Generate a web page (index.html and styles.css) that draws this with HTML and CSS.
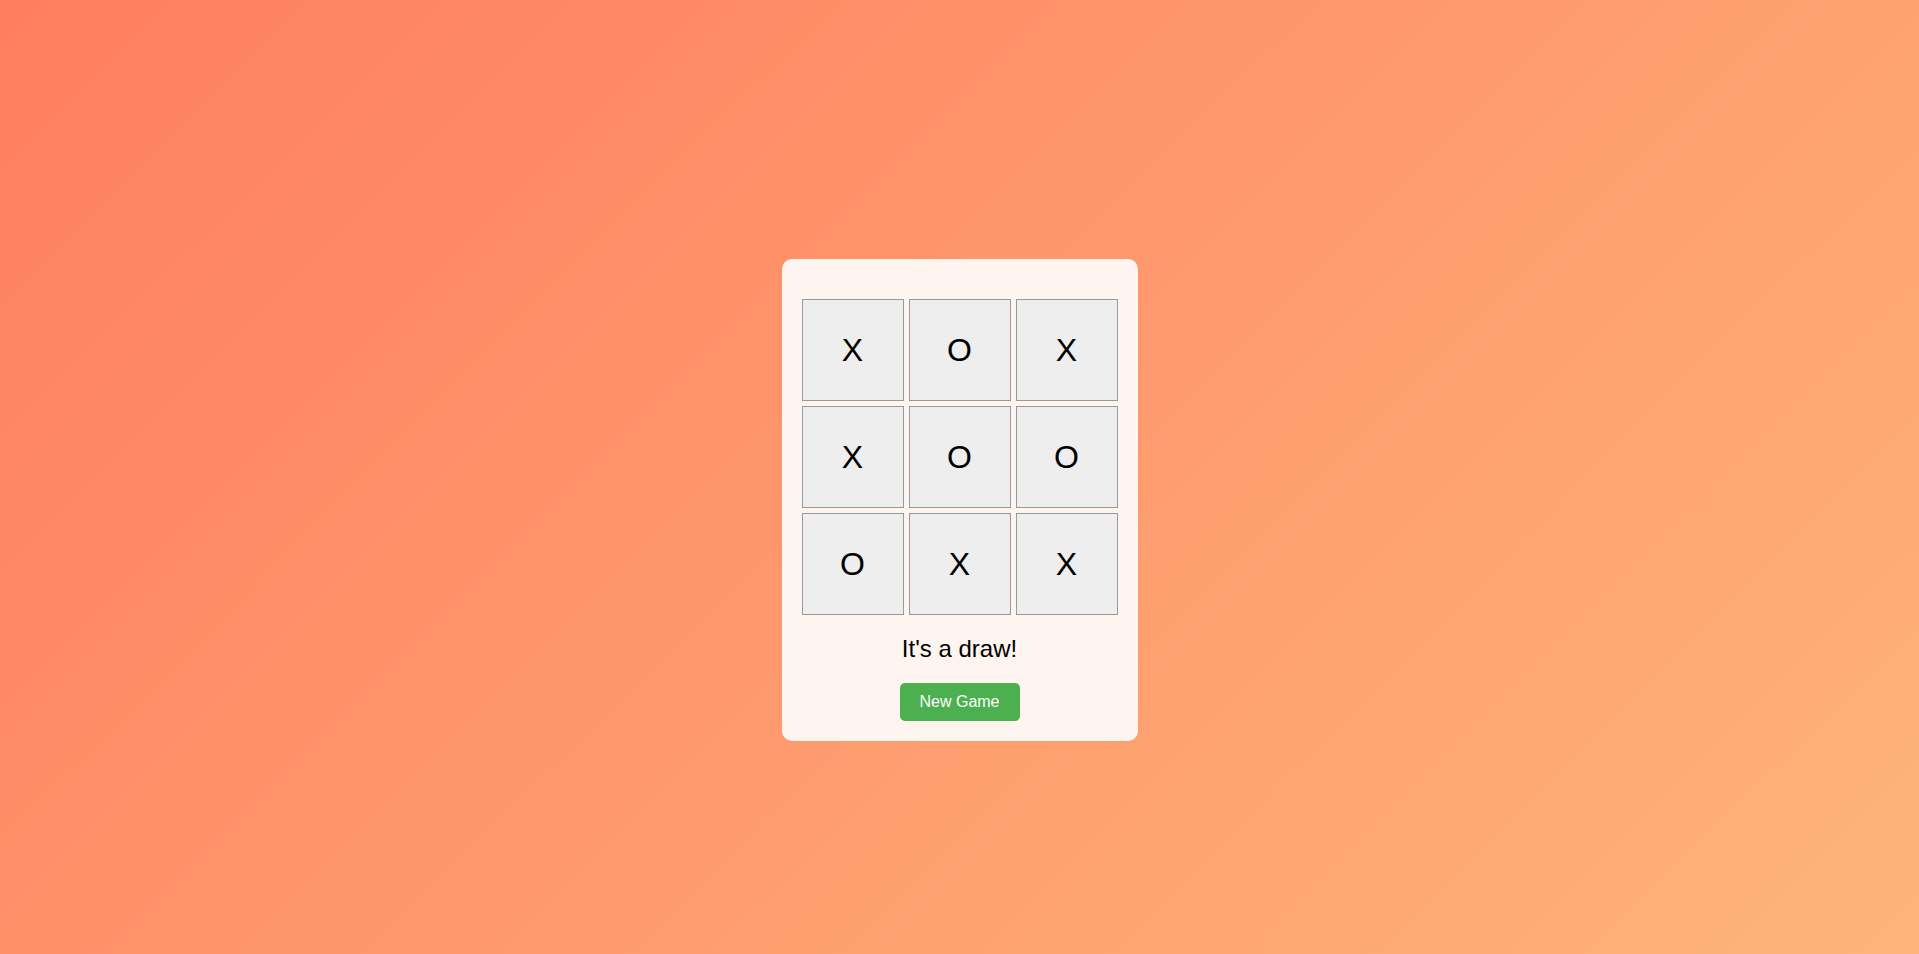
FILE: index.html
```html
<!DOCTYPE html>
<html lang="en">
<head>
<meta charset="utf-8">
<title>Tic Tac Toe</title>
<link rel="stylesheet" href="styles.css">
</head>
<body>
<main class="card">
  <div class="board">
    <div class="cell">X</div>
    <div class="cell">O</div>
    <div class="cell">X</div>
    <div class="cell">X</div>
    <div class="cell">O</div>
    <div class="cell">O</div>
    <div class="cell">O</div>
    <div class="cell">X</div>
    <div class="cell">X</div>
  </div>
  <p class="status">It's a draw!</p>
  <button class="reset">New Game</button>
</main>
</body>
</html>
```
FILE: styles.css
```css
* { box-sizing: border-box; }
html, body { margin: 0; height: 100%; }
body {
  min-height: 100vh;
  display: flex;
  align-items: center;
  justify-content: center;
  padding-top: 46px;
  background: linear-gradient(135deg, #ff7e5f, #feb47b);
  font-family: "Liberation Sans", Arial, sans-serif;
}
.card {
  width: 356px;
  background: #fff5f0;
  border-radius: 10px;
  padding: 40px 20px 20px;
  display: flex;
  flex-direction: column;
  align-items: center;
}
.board {
  display: grid;
  grid-template-columns: repeat(3, 102px);
  grid-auto-rows: 102px;
  gap: 5px;
}
.cell {
  background: #eeeeee;
  border: 1px solid #999999;
  display: flex;
  align-items: center;
  justify-content: center;
  font-size: 32px;
  color: #000;
}
.status {
  margin: 20px 0 0;
  font-size: 24px;
  color: #000;
}
.reset {
  margin-top: 20px;
  width: 120px;
  height: 38px;
  border: none;
  border-radius: 5px;
  background: #4caf50;
  color: #fff;
  font-family: "Liberation Sans", Arial, sans-serif;
  font-size: 16px;
  cursor: pointer;
}
```
